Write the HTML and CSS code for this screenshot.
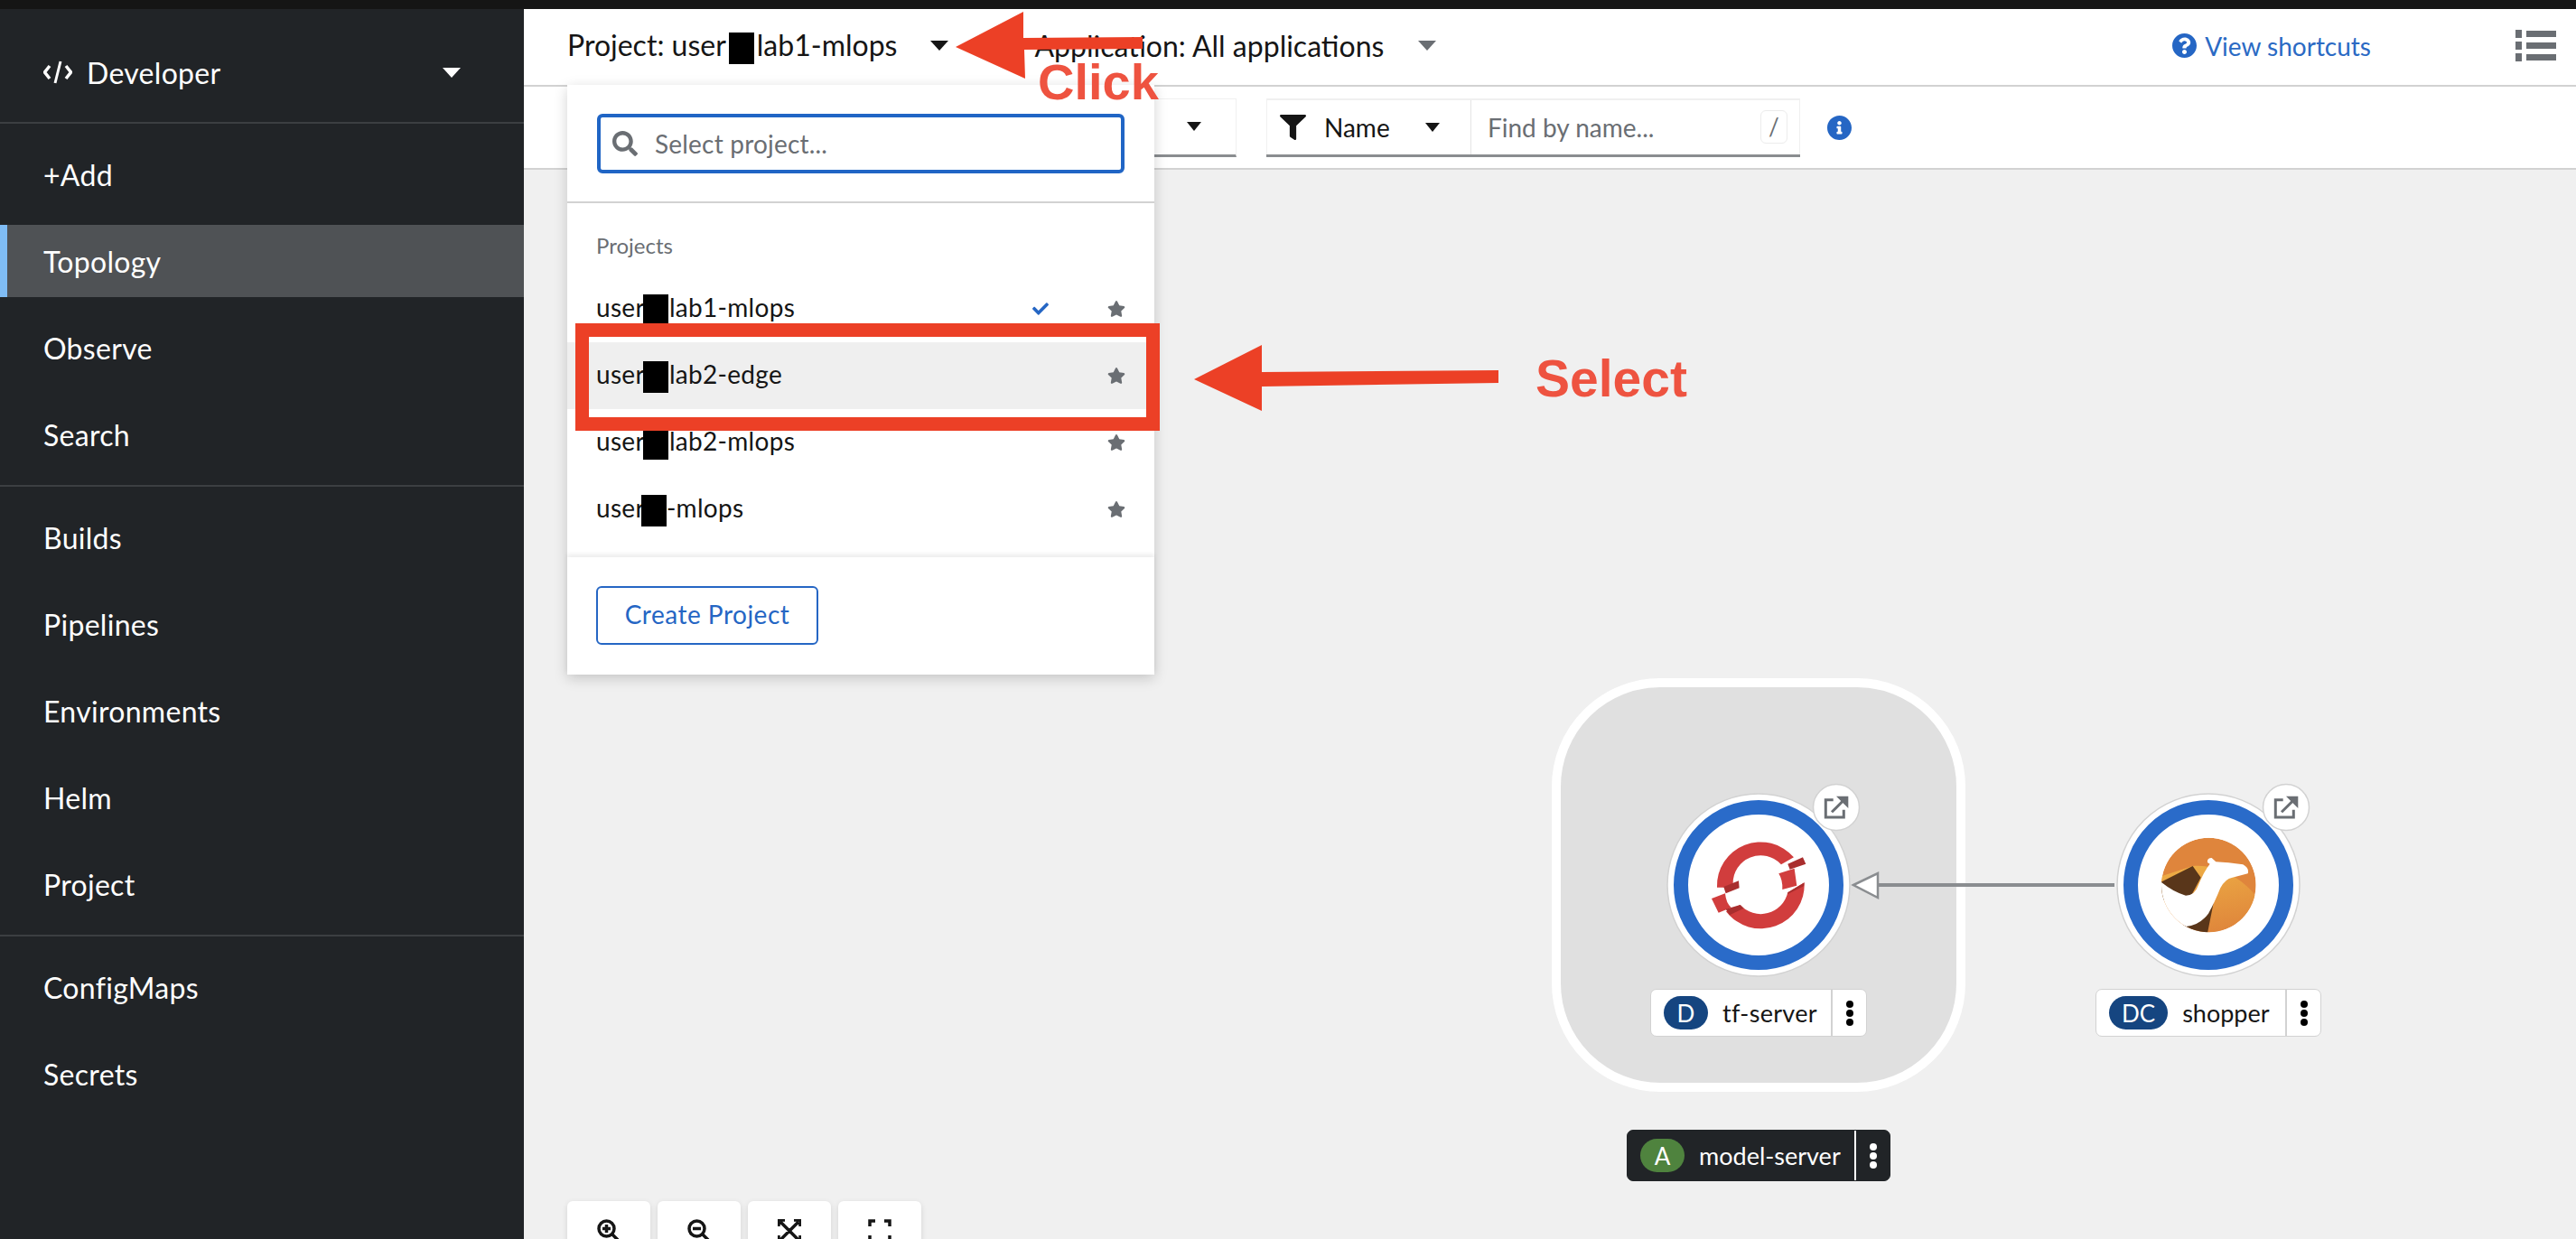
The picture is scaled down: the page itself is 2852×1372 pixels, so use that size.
FILE: index.html
```html
<!DOCTYPE html>
<html lang="en">

<head>
    <meta charset="UTF-8">
    <title>Topology</title>
    <link rel="stylesheet" href="styles.css">
</head>

<body>
    <div class="blackbar"></div>
    <div class="app">
        <!-- Sidebar -->
        <nav class="sidebar">
            <div class="perspective">
                <svg class="code-icon" viewBox="0 0 32 26"><path d="M7 6 1.500 13 7 20M25 6l5.500 7L25 20" fill="none" stroke="#fff" stroke-width="3.500"/><path d="M19 1 13 25" fill="none" stroke="#fff" stroke-width="3"/></svg>
                <span>Developer</span>
                <span class="caret caret-white"></span>
            </div>
            <div class="nav-group">
                <a class="nav-item">+Add</a>
                <a class="nav-item active">Topology</a>
                <a class="nav-item">Observe</a>
                <a class="nav-item">Search</a>
            </div>
            <div class="nav-group">
                <a class="nav-item">Builds</a>
                <a class="nav-item">Pipelines</a>
                <a class="nav-item">Environments</a>
                <a class="nav-item">Helm</a>
                <a class="nav-item">Project</a>
            </div>
            <div class="nav-group no-line">
                <a class="nav-item">ConfigMaps</a>
                <a class="nav-item">Secrets</a>
            </div>
        </nav>

        <main class="main">
            <!-- Project bar -->
            <header class="projectbar">
                <div class="bar-select">
                    <span>Project: user<i class="redact"></i>lab1-mlops</span>
                    <span class="caret caret-dark"></span>
                </div>
                <div class="bar-select app-select">
                    <span>Application: All applications</span>
                    <span class="caret caret-grey"></span>
                </div>
                <a class="shortcuts">
                    <svg class="help-icon" viewBox="8 8 496 496"><path d="M504 256c0 136.997-111.043 248-248 248S8 392.997 8 256C8 119.083 119.043 8 256 8s248 111.083 248 248zM262.655 90c-54.497 0-89.255 22.957-116.549 63.758-3.536 5.286-2.353 12.415 2.715 16.258l34.699 26.31c5.205 3.947 12.621 3.008 16.665-2.122 17.864-22.658 30.113-35.797 57.303-35.797 20.429 0 45.698 13.148 45.698 32.958 0 14.976-12.363 22.667-32.534 33.976C247.128 238.528 216 254.941 216 296v4c0 6.627 5.373 12 12 12h56c6.627 0 12-5.373 12-12v-1.333c0-28.462 83.186-29.647 83.186-106.667 0-58.002-60.165-102-116.531-102zM256 338c-25.365 0-46 20.635-46 46 0 25.364 20.635 46 46 46s46-20.636 46-46c0-25.365-20.635-46-46-46z"/></svg>
                    View shortcuts
                </a>
                <svg class="list-icon" viewBox="0 0 45 35"><path d="M0 0h7v9H0zM0 13h7v9H0zM0 26h7v9H0zM12 1h33v7H12zM12 14h33v7H12zM12 27h33v7H12z"/></svg>
            </header>

            <!-- Filter toolbar -->
            <div class="toolbar">
                <div class="tool-select"><span class="caret caret-small"></span></div>
                <div class="filter">
                    <div class="filter-name">
                        <svg class="funnel" viewBox="0 0 512 512" preserveAspectRatio="none"><path d="M487.976 0H24.028C2.71 0-8.047 25.866 7.058 40.971L192 225.941V432c0 7.831 3.821 15.17 10.237 19.662l80 55.98C298.02 518.69 320 507.493 320 487.98V225.941l184.947-184.97C520.021 25.896 509.338 0 487.976 0z"/></svg>
                        <span>Name</span>
                        <span class="caret caret-small"></span>
                    </div>
                    <div class="filter-input">
                        <span>Find by name...</span>
                        <kbd class="slash">/</kbd>
                    </div>
                </div>
                <svg class="info-icon" viewBox="8 8 496 496"><path d="M256 8C119.043 8 8 119.083 8 256c0 136.997 111.043 248 248 248s248-111.003 248-248C504 119.083 392.957 8 256 8zm0 110c23.196 0 42 18.804 42 42s-18.804 42-42 42-42-18.804-42-42 18.804-42 42-42zm56 254c0 6.627-5.373 12-12 12h-88c-6.627 0-12-5.373-12-12v-24c0-6.627 5.373-12 12-12h12v-64h-12c-6.627 0-12-5.373-12-12v-24c0-6.627 5.373-12 12-12h64c6.627 0 12 5.373 12 12v100h12c6.627 0 12 5.373 12 12v24z"/></svg>
            </div>

            <!-- Topology canvas -->
            <section class="canvas">
                <svg class="diagram" viewBox="580 188 2272 1184">
                    <defs>
                        <g id="external">
                            <circle r="25.500" fill="#fff" stroke="#d2d2d2" stroke-width="1.500"/>
                            <path d="M-3.300-8.300H-11.700V11H8.300V2.700M-5 5.300 10-9.700" fill="none" stroke="#6a6e73" stroke-width="3"/>
                            <path d="M0-12.300H13.300V1z" fill="#6a6e73"/>
                        </g>
                        <g id="ring">
                            <circle r="101" fill="#fff" stroke="#d2d2d2" stroke-width="1.500"/>
                            <circle r="86" fill="#fff" stroke="#2a6bc9" stroke-width="16"/>
                        </g>
                        <linearGradient id="hill" x1="0" y1="0" x2="0.300" y2="1">
                            <stop offset="0" stop-color="#efb146"/>
                            <stop offset="1" stop-color="#df863b"/>
                        </linearGradient>
                        <clipPath id="camel-clip"><circle cx="586" cy="420" r="157"/></clipPath>
                    </defs>

                    <!-- application group -->
                    <rect x="1723" y="756" width="448" height="448" rx="115" fill="#e0e0e0" stroke="#fff" stroke-width="10"/>

                    <!-- connector -->
                    <path d="M2080 980H2341" stroke="#8a8d90" stroke-width="4"/>
                    <path d="M2052 980 2079 967V994z" fill="#fff" stroke="#8a8d90" stroke-width="2.500"/>

                    <!-- tf-server node -->
                    <use href="#ring" x="1947" y="980"/>
                    <use href="#external" x="2033" y="894"/>
                    <g transform="translate(1700 740) scale(.3333)">
                        <path fill="#d13d3d" d="M603 728A145 145 0 0 1 858 628L816 652A92 92 0 0 0 656 716L626 728Z"/>
                        <path fill="#d13d3d" d="M893 712A145 145 0 0 1 633 808L680 786A92 92 0 0 0 838 745Z"/>
                        <path fill="#d13d3d" d="M808 682 860 665 868 722 820 735Q822 705 808 682Z"/>
                        <path fill="#d13d3d" d="M585 765 630 748Q633 780 650 795L608 812Z"/>
                        <path fill="#a92e2e" d="M625 726 675 706 677 730 632 748ZM838 650 888 628 898 650 845 668ZM838 745 893 712 891 724 838 750ZM632 800 680 786 692 797 645 820Z"/>
                    </g>

                    <!-- shopper node -->
                    <use href="#ring" x="2445" y="980"/>
                    <use href="#external" x="2531" y="894"/>
                    <g transform="translate(2250 840) scale(.3333)">
                        <g clip-path="url(#camel-clip)">
                            <circle cx="586" cy="420" r="157" fill="#df853c"/>
                            <path d="M533 357C620 350 700 400 745 460V600H400V400Z" fill="url(#hill)"/>
                            <path d="M428 410 533 357 560 395 520 470 428 470ZM500 555 602 480 582 580 500 580Z" fill="#59361a"/>
                            <path d="M425 408Q470 445 510 455Q540 455 552 420Q570 375 590 350L582 345Q580 330 596 330L610 343Q650 345 700 352Q722 365 716 382L665 395Q640 400 625 430Q605 480 585 515Q555 555 510 558Q450 540 425 470Z" fill="#fff"/>
                        </g>
                    </g>
                </svg>

                <div class="node-label label-tf">
                    <span class="pill pill-blue">D</span>
                    <span class="label-name">tf-server</span>
                    <span class="kebab"><i></i><i></i><i></i></span>
                </div>
                <div class="node-label label-shopper">
                    <span class="pill pill-blue">DC</span>
                    <span class="label-name">shopper</span>
                    <span class="kebab"><i></i><i></i><i></i></span>
                </div>
                <div class="node-label label-model">
                    <span class="pill pill-green">A</span>
                    <span class="label-name">model-server</span>
                    <span class="kebab"><i></i><i></i><i></i></span>
                </div>

                <div class="zoom-controls">
                    <button class="zoom-btn"><svg viewBox="0 0 26 26"><circle cx="10.500" cy="10.500" r="8.500"/><path d="M10.500 6v9M6 10.500h9M17 17l8 8"/></svg></button>
                    <button class="zoom-btn"><svg viewBox="0 0 26 26"><circle cx="10.500" cy="10.500" r="8.500"/><path d="M6 10.500h9M17 17l8 8"/></svg></button>
                    <button class="zoom-btn"><svg viewBox="0 0 26 26"><path d="M3 3l20 20M23 3 3 23M1 8V1h7M18 1h7v7M25 18v7h-7M8 25H1v-7"/></svg></button>
                    <button class="zoom-btn"><svg viewBox="0 0 26 26"><path d="M2 8V2h6M18 2h6v6M24 18v6h-6M8 24H2v-6"/></svg></button>
                </div>
            </section>

            <!-- Project dropdown -->
            <div class="project-menu">
                <div class="menu-search">
                    <div class="search-input">
                        <svg class="search-icon" viewBox="0 0 512 512"><path d="M505 442.700L405.300 343c-4.500-4.500-10.600-7-17-7H372c27.600-35.300 44-79.700 44-128C416 93.100 322.900 0 208 0S0 93.100 0 208s93.100 208 208 208c48.300 0 92.700-16.400 128-44v16.300c0 6.400 2.500 12.500 7 17l99.700 99.700c9.400 9.400 24.600 9.400 33.900 0l28.300-28.300c9.400-9.400 9.400-24.600.1-34zM208 336c-70.700 0-128-57.200-128-128 0-70.700 57.200-128 128-128 70.700 0 128 57.200 128 128 0 70.700-57.200 128-128 128z"/></svg>
                        <span>Select project...</span>
                    </div>
                </div>
                <div class="menu-list">
                    <div class="menu-title">Projects</div>
                    <div class="menu-row">
                        <span>user<i class="redact"></i>lab1-mlops</span>
                        <svg class="check" viewBox="0 0 512 512"><path d="M173.898 439.404l-166.400-166.400c-9.997-9.997-9.997-26.206 0-36.204l36.203-36.204c9.997-9.998 26.207-9.998 36.204 0L192 312.690 432.095 72.596c9.997-9.997 26.207-9.997 36.204 0l36.203 36.204c9.997 9.997 9.997 26.206 0 36.204l-294.400 294.401c-9.998 9.997-26.207 9.997-36.204-.001z"/></svg>
                        <svg class="star" viewBox="0 0 576 512"><path d="M259.300 17.800L194 150.200 47.900 171.500c-26.200 3.800-36.700 36.100-17.700 54.600l105.700 103-25 145.500c-4.500 26.300 23.200 46 46.400 33.700L288 439.600l130.700 68.700c23.200 12.200 50.900-7.400 46.400-33.700l-25-145.500 105.700-103c19-18.500 8.500-50.800-17.700-54.600L382 150.200 316.700 17.800c-11.700-23.600-45.600-23.900-57.400 0z"/></svg>
                    </div>
                    <div class="menu-row hover">
                        <span>user<i class="redact"></i>lab2-edge</span>
                        <svg class="star" viewBox="0 0 576 512"><path d="M259.300 17.800L194 150.200 47.900 171.500c-26.200 3.800-36.700 36.100-17.700 54.600l105.700 103-25 145.500c-4.500 26.300 23.200 46 46.400 33.700L288 439.600l130.700 68.700c23.200 12.200 50.900-7.400 46.400-33.700l-25-145.500 105.700-103c19-18.500 8.500-50.800-17.700-54.600L382 150.200 316.700 17.800c-11.700-23.600-45.600-23.900-57.400 0z"/></svg>
                    </div>
                    <div class="menu-row">
                        <span>user<i class="redact"></i>lab2-mlops</span>
                        <svg class="star" viewBox="0 0 576 512"><path d="M259.300 17.800L194 150.200 47.900 171.500c-26.200 3.800-36.700 36.100-17.700 54.600l105.700 103-25 145.500c-4.500 26.300 23.200 46 46.400 33.700L288 439.600l130.700 68.700c23.200 12.200 50.900-7.400 46.400-33.700l-25-145.500 105.700-103c19-18.500 8.500-50.800-17.700-54.600L382 150.200 316.700 17.800c-11.700-23.600-45.600-23.900-57.400 0z"/></svg>
                    </div>
                    <div class="menu-row">
                        <span>user<i class="redact redact-short"></i>-mlops</span>
                        <svg class="star" viewBox="0 0 576 512"><path d="M259.300 17.800L194 150.200 47.900 171.500c-26.200 3.800-36.700 36.100-17.700 54.600l105.700 103-25 145.500c-4.500 26.300 23.200 46 46.400 33.700L288 439.600l130.700 68.700c23.200 12.200 50.900-7.400 46.400-33.700l-25-145.500 105.700-103c19-18.500 8.500-50.800-17.700-54.600L382 150.200 316.700 17.800c-11.700-23.600-45.600-23.900-57.400 0z"/></svg>
                    </div>
                </div>
                <div class="menu-footer">
                    <button class="create-btn">Create Project</button>
                </div>
            </div>
        </main>
    </div>

    <!-- Red annotations drawn over the screenshot -->
    <svg class="annotations" viewBox="0 0 2852 1372">
        <path d="M1058 52 1133 13 1133 42 1265 41V54L1134 55 1135 87Z"/>
        <path d="M1322 420 1397 382V412L1659 410V424L1397 428V455Z"/>
        <rect x="644.500" y="365.500" width="632" height="104" fill="none" stroke="#ec4026" stroke-width="15"/>
    </svg>
    <div class="note note-click">Click</div>
    <div class="note note-select">Select</div>
</body>

</html>
```
FILE: styles.css
```css
* {
    box-sizing: border-box;
}

body {
    margin: 0;
    width: 2852px;
    height: 1372px;
    overflow: hidden;
    position: relative;
    font-family: 'Lato', sans-serif;
    font-size: 32px;
    color: #151515;
    background-color: #f0f0f0;
}

.blackbar {
    height: 10px;
    background-color: #151515;
}

.app {
    display: flex;
    height: 1362px;
}

/* carets */
.caret {
    display: inline-block;
    width: 0;
    height: 0;
    border-left: 10px solid transparent;
    border-right: 10px solid transparent;
    border-top: 11px solid #151515;
}

.caret-white {
    border-top-color: #fff;
    margin-left: auto;
}

.caret-grey {
    border-top-color: #6a6e73;
}

.caret-small {
    border-left-width: 8px;
    border-right-width: 8px;
    border-top-width: 10px;
}

.redact {
    display: inline-block;
    width: 28px;
    height: 35px;
    margin: 0 3px;
    vertical-align: middle;
    background-color: #000;
}

/* sidebar */
.sidebar {
    width: 580px;
    flex-shrink: 0;
    background-color: #212427;
    color: #fff;
    letter-spacing: 0.3px;
}

.perspective {
    display: flex;
    align-items: center;
    height: 127px;
    padding: 15px 70px 0 48px;
    border-bottom: 2px solid #3c3f42;
}

.code-icon {
    width: 32px;
    height: 26px;
    margin-right: 16px;
}

.nav-group {
    display: flex;
    flex-direction: column;
    gap: 16px;
    padding: 16px 0;
    border-bottom: 2px solid #3c3f42;
}

.no-line {
    border-bottom: none;
}

.nav-item {
    display: flex;
    align-items: center;
    height: 80px;
    padding-left: 48px;
}

.nav-item.active {
    background-color: #4f5255;
    box-shadow: inset 8px 0 0 #7fbcf4;
}

/* main */
.main {
    position: relative;
    flex: 1;
    display: flex;
    flex-direction: column;
    min-width: 0;
}

.projectbar {
    display: flex;
    align-items: center;
    height: 86px;
    padding: 0 0 3px 48px;
    background-color: #fff;
    border-bottom: 2px solid #d2d2d2;
}

.bar-select {
    display: flex;
    align-items: center;
    gap: 37px;
}

.app-select {
    margin-left: 95px;
    gap: 38px;
}

.shortcuts {
    display: flex;
    align-items: center;
    gap: 9px;
    margin-left: auto;
    font-size: 28px;
    color: #2b6ac4;
}

.help-icon,
.info-icon {
    width: 27px;
    height: 27px;
    fill: #2566c4;
}

.list-icon {
    width: 45px;
    height: 35px;
    margin: 0 22px 0 160px;
    fill: #6a6e73;
}

.toolbar {
    display: flex;
    align-items: center;
    height: 92px;
    padding-left: 48px;
    background-color: #fff;
    border-bottom: 2px solid #d2d2d2;
}

.tool-select {
    display: flex;
    align-items: center;
    justify-content: flex-end;
    width: 741px;
    height: 65px;
    padding-right: 38px;
    border: 1px solid #f0f0f0;
    border-bottom: 3px solid #8a8d90;
}

.filter {
    display: flex;
    width: 591px;
    height: 65px;
    margin-left: 33px;
    border-top: 2px solid #f0f0f0;
    border-bottom: 3px solid #8a8d90;
}

.filter-name {
    display: flex;
    align-items: center;
    width: 227px;
    padding-left: 14px;
    font-size: 28px;
    border-left: 1px solid #f0f0f0;
    border-right: 1px solid #e4e4e4;
}

.funnel {
    width: 29px;
    height: 28px;
    margin-right: 20px;
    fill: #151515;
}

.filter-name .caret {
    margin-left: 39px;
}

.filter-input {
    flex: 1;
    display: flex;
    align-items: center;
    justify-content: space-between;
    padding: 0 13px 0 18px;
    font-size: 28px;
    color: #6a6e73;
    border-right: 1px solid #f0f0f0;
}

.slash {
    width: 30px;
    height: 37px;
    text-align: center;
    font-family: 'Lato', sans-serif;
    font-size: 26px;
    line-height: 35px;
    border: 1px solid #ececec;
    border-radius: 6px;
}

.info-icon {
    margin-left: 30px;
}

/* topology */
.canvas {
    position: relative;
    flex: 1;
    overflow: hidden;
    background-color: #f0f0f0;
}

.diagram {
    position: absolute;
    top: 0;
    left: 0;
    width: 100%;
    height: 100%;
}

.node-label {
    position: absolute;
    display: flex;
    align-items: center;
    height: 53px;
    font-size: 27px;
    background-color: #fff;
    border: 1.5px solid #d2d2d2;
    border-radius: 7px;
}

.label-tf {
    left: 1247px;
    top: 907px;
    width: 240px;
    letter-spacing: 0.3px;
}

.label-shopper {
    left: 1740px;
    top: 907px;
    width: 250px;
}

.label-model {
    left: 1221px;
    top: 1063px;
    width: 292px;
    height: 57px;
    color: #fff;
    background-color: #212427;
    border-color: #212427;
}

.pill {
    display: flex;
    align-items: center;
    justify-content: center;
    height: 37px;
    min-width: 49px;
    margin: 0 16px 0 14px;
    padding: 0 14px;
    border-radius: 19px;
    color: #fff;
    font-size: 26px;
}

.pill-blue {
    background-color: #154580;
}

.pill-green {
    background-color: #4f833e;
}

.label-name {
    flex: 1;
}

.kebab {
    display: flex;
    flex-direction: column;
    align-items: center;
    justify-content: center;
    gap: 2px;
    width: 39px;
    height: 100%;
    border-left: 2px solid #d2d2d2;
}

.label-model .kebab {
    border-left-color: #fff;
}

.kebab i {
    width: 8px;
    height: 8px;
    border-radius: 50%;
    background-color: #000;
}

.label-model .kebab i {
    background-color: #fff;
}

.zoom-controls {
    position: absolute;
    left: 48px;
    top: 1142px;
    display: flex;
    gap: 8px;
}

.zoom-btn {
    display: flex;
    align-items: flex-start;
    justify-content: center;
    width: 92px;
    height: 80px;
    padding: 20px 0 0;
    border: none;
    border-radius: 6px;
    background-color: #fff;
    box-shadow: 0 2px 6px rgba(0, 0, 0, 0.12);
}

.zoom-btn svg {
    width: 26px;
    height: 26px;
    fill: none;
    stroke: #151515;
    stroke-width: 3.500;
}

/* project dropdown */
.project-menu {
    position: absolute;
    left: 48px;
    top: 84px;
    width: 650px;
    height: 653px;
    background-color: #fff;
    box-shadow: 0 4px 14px rgba(0, 0, 0, 0.18);
}

.menu-search {
    height: 131px;
    padding: 32px 33px 0;
    border-bottom: 2px solid #d2d2d2;
}

.search-input {
    display: flex;
    align-items: center;
    height: 66px;
    padding-left: 13px;
    font-size: 28px;
    color: #6a6e73;
    border: 4px solid #2065c5;
    border-radius: 6px;
    letter-spacing: 0.2px;
}

.search-icon {
    width: 28px;
    height: 28px;
    margin-right: 19px;
    fill: #6a6e73;
}

.menu-list {
    height: 392px;
    padding-top: 30px;
}

.menu-title {
    height: 50px;
    padding-left: 32px;
    font-size: 24px;
    line-height: 34px;
    color: #6a6e73;
}

.menu-row {
    display: flex;
    align-items: center;
    height: 74px;
    padding: 0 32px;
    font-size: 28px;
    letter-spacing: 0.3px;
}

.menu-row.hover {
    background-color: #efefef;
}

.menu-row span {
    flex: 1;
}

.menu-row .redact {
    margin: 0 1px 0 -2px;
}

.menu-row .redact-short {
    margin: 0 0 0 -4px;
}

.check {
    width: 22px;
    height: 18px;
    margin-right: 63px;
    fill: #2566c4;
}

.star {
    width: 20px;
    height: 18px;
    fill: #6a6e73;
}

.menu-footer {
    height: 130px;
    padding: 32px 32px;
    box-shadow: 0 -3px 5px rgba(0, 0, 0, 0.08);
}

.create-btn {
    width: 246px;
    height: 65px;
    padding: 0 0 3px;
    font-family: 'Lato', sans-serif;
    font-size: 28px;
    letter-spacing: 0.5px;
    color: #2566c4;
    background-color: #fff;
    border: 2px solid #2566c4;
    border-radius: 6px;
}

/* annotations */
.annotations {
    position: absolute;
    top: 0;
    left: 0;
    width: 2852px;
    height: 1372px;
    fill: #ec4026;
    pointer-events: none;
}

.note {
    position: absolute;
    font-family: 'Liberation Sans', sans-serif;
    font-weight: bold;
    line-height: 1;
    color: #ee5340;
}

.note-click {
    left: 1149px;
    top: 63px;
    font-size: 56px;
}

.note-select {
    left: 1700px;
    top: 391px;
    font-size: 57px;
}
```
